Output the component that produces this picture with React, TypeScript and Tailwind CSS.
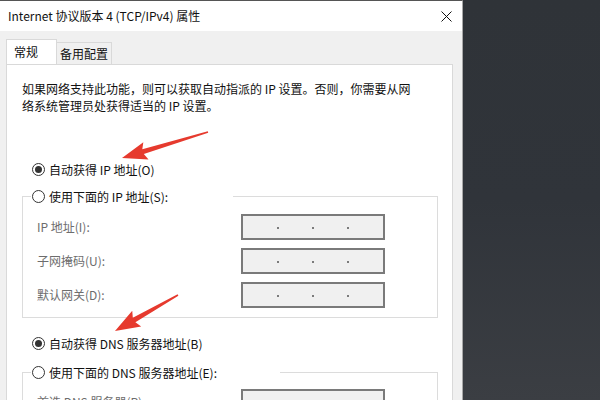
import React from "react"

const font = { fontFamily: '"Noto Sans CJK SC", "Noto Sans", sans-serif' }

type Pt = [number, number]

// red annotation arrow, tapered shaft with wide head
function arrowPoints(tail: Pt, tip: Pt) {
  const dx = tip[0] - tail[0]
  const dy = tip[1] - tail[1]
  const len = Math.hypot(dx, dy)
  const ux = dx / len
  const uy = dy / len
  const nx = -uy
  const ny = ux
  const head = 22
  const neck: Pt = [tip[0] - ux * head, tip[1] - uy * head]
  const barb: Pt = [tip[0] - ux * (head + 3), tip[1] - uy * (head + 3)]
  const p = (b: Pt, w: number) => `${b[0] + nx * w},${b[1] + ny * w}`
  return [
    p(tail, 0.8),
    p(neck, 2.6),
    p(barb, 9),
    `${tip[0]},${tip[1]}`,
    p(barb, -9),
    p(neck, -2.6),
    p(tail, -0.8),
  ].join(" ")
}

function Radio({ checked }: { checked?: boolean }) {
  return (
    <span className="w-[13px] h-[13px] rounded-full border border-[#333] bg-white flex items-center justify-center shrink-0">
      {checked && <span className="w-[7px] h-[7px] rounded-full bg-[#333]" />}
    </span>
  )
}

function RadioRow({ label, checked }: { label: string; checked?: boolean }) {
  return (
    <div className="flex items-center gap-[4px] h-[18px] ml-[10px] text-[12px] leading-[17px] text-[#111]">
      <Radio checked={checked} />
      <span>{label}</span>
    </div>
  )
}

function IpField() {
  return (
    <div className="w-[144px] h-[26px] border-2 border-[#7a7a7a] bg-[#f0f0f0] grid grid-cols-4">
      {[0, 1, 2, 3].map((i) => (
        <div key={i} className="relative">
          {i < 3 && (
            <span className="absolute right-[-1px] top-[11px] w-[2px] h-[2px] rounded-full bg-[#555]" />
          )}
        </div>
      ))}
    </div>
  )
}

function FieldRow({ label }: { label: string }) {
  return (
    <div className="flex items-center h-[26px]">
      <span className="w-[204px] text-[12px] text-[#6d6d6d]">{label}</span>
      <IpField />
    </div>
  )
}

export default function App() {
  return (
    <div
      className="relative w-[600px] h-[400px] overflow-hidden flex bg-gradient-to-b from-[#2f3338] via-[#30343a] to-[#3b3e43]"
      style={font}
    >
      {/* Dialog */}
      <div className="w-[463px] h-full flex flex-col bg-white border-t border-[#555] border-r border-r-[#a8a8a8] shrink-0">
        {/* Title bar */}
        <div className="h-[30px] flex items-center justify-between pl-[8px] pr-[10px] bg-white shrink-0">
          <span className="text-[12px] text-[#111]">Internet 协议版本 4 (TCP/IPv4) 属性</span>
          <svg width="11" height="11" viewBox="0 0 11 11">
            <path d="M0.5 0.5 L10.5 10.5 M10.5 0.5 L0.5 10.5" stroke="#111" strokeWidth="1" />
          </svg>
        </div>

        {/* Body */}
        <div className="flex-1 bg-[#f0f0f0] pl-[6px] pr-[9px] pt-[9px] flex flex-col">
          {/* Tabs */}
          <div className="flex items-end h-[24px]">
            <div className="w-[51px] h-[25px] bg-white border border-[#d9d9d9] border-b-0 relative z-10 flex items-center pl-[7px] text-[12px] text-[#111]">
              常规
            </div>
            <div className="w-[55px] h-[22px] bg-[#f0f0f0] border border-[#d9d9d9] border-l-0 border-b-0 flex items-center justify-center text-[12px] text-[#111]">
              备用配置
            </div>
          </div>

          {/* Panel */}
          <div className="flex-1 bg-white border border-[#d9d9d9] pl-[15px] pr-[14px] pt-[15px] flex flex-col">
            <p className="text-[12px] leading-[17px] text-[#111]">
              如果网络支持此功能，则可以获取自动指派的 IP 设置。否则，你需要从网
              <br />
              络系统管理员处获得适当的 IP 设置。
            </p>

            <div className="mt-[46px]">
              <RadioRow label="自动获得 IP 地址(O)" checked />
            </div>

            <fieldset className="mt-[9px] border border-[#dcdcdc] pl-[14px] pb-[9px]">
              <legend className="-ml-[6px] w-[202px] flex items-center gap-[4px] h-[18px] pl-[1px] text-[12px] leading-[17px] text-[#111]">
                <Radio />
                <span>使用下面的 IP 地址(S):</span>
              </legend>
              <div className="flex flex-col gap-[8px] pt-[9px]">
                <FieldRow label="IP 地址(I):" />
                <FieldRow label="子网掩码(U):" />
                <FieldRow label="默认网关(D):" />
              </div>
            </fieldset>

            <div className="mt-[16px]">
              <RadioRow label="自动获得 DNS 服务器地址(B)" checked />
            </div>

            <fieldset className="mt-[11px] border border-[#dcdcdc] pl-[14px] pb-[9px]">
              <legend className="-ml-[6px] w-[249px] flex items-center gap-[4px] h-[18px] pl-[1px] text-[12px] leading-[17px] text-[#111]">
                <Radio />
                <span>使用下面的 DNS 服务器地址(E):</span>
              </legend>
              <div className="flex flex-col gap-[8px] pt-[8px]">
                <FieldRow label="首选 DNS 服务器(P):" />
                <FieldRow label="备用 DNS 服务器(A):" />
              </div>
            </fieldset>
          </div>
        </div>
      </div>

      {/* Annotation arrows */}
      <svg className="absolute inset-0 pointer-events-none" width="600" height="400">
        <polygon points={arrowPoints([208, 132], [122, 158])} fill="#e63a2e" />
        <polygon points={arrowPoints([178, 295], [115, 331])} fill="#e63a2e" />
      </svg>
    </div>
  )
}
